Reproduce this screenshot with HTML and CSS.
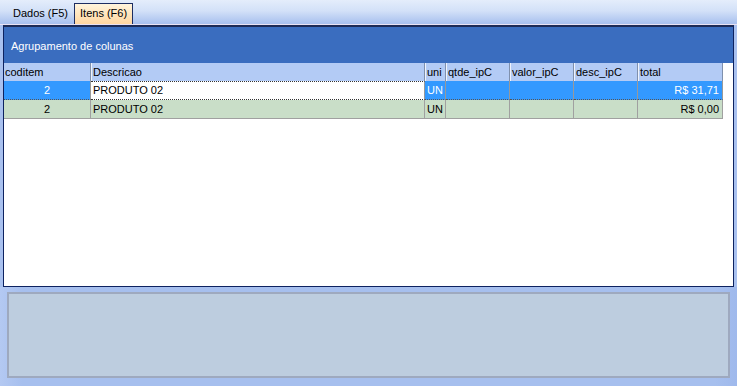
FILE: index.html
```html
<!DOCTYPE html>
<html>
<head>
<meta charset="utf-8">
<link rel="stylesheet" href="styles.css">
</head>
<body>
<div class="app">
  <div class="tabs">
    <div class="tab">Dados (F5)</div>
    <div class="tab active">Itens (F6)</div>
  </div>
  <div class="panel">
    <div class="group">Agrupamento de colunas</div>
    <div class="gridwrap">
      <div class="grid">
        <div class="row head">
          <div class="cell">coditem</div>
          <div class="cell">Descricao</div>
          <div class="cell">uni</div>
          <div class="cell">qtde_ipC</div>
          <div class="cell">valor_ipC</div>
          <div class="cell">desc_ipC</div>
          <div class="cell">total</div>
        </div>
        <div class="row sel">
          <div class="cell center">2</div>
          <div class="cell edit">PRODUTO 02</div>
          <div class="cell">UN</div>
          <div class="cell"></div>
          <div class="cell"></div>
          <div class="cell"></div>
          <div class="cell right">R$ 31,71</div>
        </div>
        <div class="row alt">
          <div class="cell center">2</div>
          <div class="cell">PRODUTO 02</div>
          <div class="cell">UN</div>
          <div class="cell"></div>
          <div class="cell"></div>
          <div class="cell"></div>
          <div class="cell right">R$ 0,00</div>
        </div>
      </div>
      <div class="vstrip"></div>
    </div>
  </div>
  <div class="footer">
    <div class="footpanel"></div>
  </div>
</div>
</body>
</html>
```

FILE: styles.css
```css
* { box-sizing: border-box; }
html, body { margin: 0; padding: 0; }
body {
  width: 737px;
  height: 386px;
  overflow: hidden;
  font-family: "Liberation Sans", Arial, sans-serif;
  font-size: 11px;
  color: #000;
  background: #a9c1ef;
}
.app {
  width: 737px;
  height: 386px;
  display: flex;
  flex-direction: column;
}
.tabs {
  height: 25px;
  display: flex;
  align-items: flex-end;
  padding-left: 3px;
  gap: 2px;
  background: linear-gradient(#e4edfb 0%, #d3e1f8 45%, #a7c0ee 100%);
  border-bottom: 1px solid #e9e2f3;
}
.tab {
  height: 20px;
  line-height: 18px;
  padding: 0 4px 0 10px;
}
.tab.active {
  height: 21px;
  padding: 0 5px;
  border: 1px solid #1c2d62;
  border-bottom: none;
  background: linear-gradient(#fff4dc, #ffd6a0);
}
.panel {
  height: 262px;
  margin: 0 3px 0 3px;
  border: 1px solid #0d2260;
  border-top: 2px solid #1d2b56;
  background: #fff;
  display: flex;
  flex-direction: column;
}
.group {
  height: 36px;
  background: #3a6dbf;
  color: #fff;
  padding-left: 7px;
  padding-top: 1px;
  line-height: 36px;
  flex: none;
}
.gridwrap {
  flex: 1;
  display: flex;
}
.grid {
  width: 719px;
  background: #fff;
}
.vstrip {
  flex: 1;
  background: #fff;
}
.row {
  display: grid;
  grid-template-columns: 87px 334px 21px 64px 64px 64px 85px;
  height: 19px;
}
.cell {
  height: 19px;
  line-height: 18px;
  padding: 0 2px;
  white-space: nowrap;
  overflow: hidden;
  border-right: 1px solid #a0a0a0;
  border-bottom: 1px solid #a0a0a0;
}
.head {
  background: #b3cbf5;
  height: 18px;
}
.head .cell {
  height: 18px;
  line-height: 18px;
  border-right: 1px solid #7f90ad;
  border-bottom: none;
  border-left: 1px solid #eef3fd;
  padding-left: 1px;
}
.head .cell:first-child {
  border-left: none;
}
.sel .cell {
  background: #3399ff;
  color: #fff;
  border-right-color: #999;
  border-bottom: 1px dotted #555;
}
.sel .cell.edit {
  background: #fff;
  color: #000;
  border-top: 1px dotted #333;
  border-bottom: 1px dotted #333;
  line-height: 16px;
}
.alt .cell {
  background: #c9dec8;
}
.center { text-align: center; }
.right { text-align: right; padding-right: 3px; }
.footer {
  flex: 1;
  padding: 5px 7px 8px 7px;
  background: linear-gradient(90deg, #b4c9f2 0%, #a6bfee 3%, #a6bfee 97%, #9fb9ec 100%);
}
.footpanel {
  height: 100%;
  border: 2px solid #9ea9bf;
  background: #bdcddf;
}
```
